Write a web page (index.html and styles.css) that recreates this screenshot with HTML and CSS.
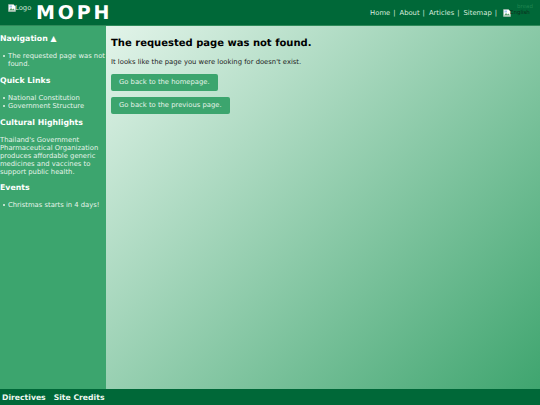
FILE: index.html
```html
<!DOCTYPE html>
<html>
<head>
    <title>MOPH</title>
    <link rel="stylesheet" href="styles.css">
</head>
<body>
    <header class="topbar">
        <div class="brand">
            <span class="logo">
                <svg class="broken" viewBox="0 0 16 16"><path d="M1 1h10l4 4v10H1z" fill="#fff" stroke="#a9b4ae"/><path d="M2 13l4-5 3 3 2-2 3 4z" fill="#5d9e6f"/><path d="M3 3h5v4H3z" fill="#a8c8f0"/></svg>Logo
            </span>
            <span class="site-name">MOPH</span>
        </div>
        <nav class="topnav">
            <a href="#">Home</a><span class="sep">|</span>
            <a href="#">About</a><span class="sep">|</span>
            <a href="#">Articles</a><span class="sep">|</span>
            <a href="#">Sitemap</a><span class="sep">|</span>
            <span class="lang">
                <svg class="broken" viewBox="0 0 16 16"><path d="M1 1h10l4 4v10H1z" fill="#fff" stroke="#a9b4ae"/><path d="M2 13l4-5 3 3 2-2 3 4z" fill="#5d9e6f"/><path d="M3 3h5v4H3z" fill="#a8c8f0"/></svg>English
            </span>
        </nav>
        <span class="crumb">bread</span>
    </header>
    <div class="middle">
        <aside class="sidebar">
            <h3>Navigation ▲</h3>
            <ul>
                <li>The requested page was not found.</li>
            </ul>
            <h3>Quick Links</h3>
            <ul>
                <li>National Constitution</li>
                <li>Government Structure</li>
            </ul>
            <h3>Cultural Highlights</h3>
            <p>Thailand's Government Pharmaceutical Organization produces affordable generic medicines and vaccines to support public health.</p>
            <h3>Events</h3>
            <ul>
                <li>Christmas starts in 4 days!</li>
            </ul>
        </aside>
        <main class="content">
            <h1>The requested page was not found.</h1>
            <p>It looks like the page you were looking for doesn't exist.</p>
            <a class="btn" href="#">Go back to the homepage.</a>
            <a class="btn" href="#">Go back to the previous page.</a>
        </main>
    </div>
    <footer class="bottombar">
        <a href="#">Directives</a>
        <a href="#">Site Credits</a>
    </footer>
</body>
</html>
```

FILE: styles.css
```css
html, body {
    height: 100%;
}
body {
    margin: 0;
    display: flex;
    flex-direction: column;
    font-family: "DejaVu Sans", sans-serif;
    font-size: 6.8px;
    text-rendering: geometricPrecision;
    overflow: hidden;
}
.topbar {
    height: 25px;
    flex: none;
    display: flex;
    justify-content: space-between;
    background-color: #006838;
    border-bottom: 1px solid #2f8a5a;
    position: relative;
}
.brand {
    display: flex;
    align-items: flex-start;
    padding-left: 8px;
}
.logo {
    display: flex;
    align-items: center;
    width: 28px;
    height: 8px;
    margin-top: 4px;
    color: #d5e8dc;
    white-space: nowrap;
}
.broken {
    flex: none;
    width: 8px;
    height: 8px;
    margin-right: -1px;
}
.site-name {
    color: #fff;
    font-size: 19px;
    font-weight: bold;
    letter-spacing: 2.8px;
    line-height: 26px;
}
.topnav {
    display: flex;
    align-items: center;
    height: 25px;
    padding-right: 10px;
    color: #d9ecdf;
}
.topnav a {
    color: #d9ecdf;
    text-decoration: none;
}
.sep {
    margin: 0 4px 0 3px;
}
.lang {
    display: flex;
    align-items: center;
    width: 27px;
    margin-left: 2px;
    font-size: 5.5px;
    color: #0b2b18;
    white-space: nowrap;
}
.crumb {
    position: absolute;
    top: 4px;
    right: 7px;
    font-size: 5.5px;
    color: #1f8450;
}
.middle {
    flex: 1;
    display: flex;
    min-height: 0;
}
.sidebar {
    width: 106px;
    flex: none;
    padding-top: 7.5px;
    background-color: #3ca56e;
    color: #e6f4ea;
    line-height: 8px;
}
.sidebar h3 {
    margin: 0;
    font-size: 7.8px;
    line-height: 10px;
    color: #fff;
}
.sidebar ul {
    margin: 8px 0;
    padding: 0;
    list-style: none;
}
.sidebar li {
    display: flex;
}
.sidebar li::before {
    content: "";
    flex: none;
    width: 2px;
    height: 2px;
    margin: 3px 3px 0 3px;
    border-radius: 50%;
    background-color: #e6f4ea;
}
.sidebar p {
    margin: 8px 0 7px;
}
.content {
    flex: 1;
    padding: 11px 5px;
    background: linear-gradient(135deg, #e3f4ea 0%, #3fa56f 100%);
    color: #222;
}
.content h1 {
    margin: 0 0 6px;
    font-size: 10px;
    line-height: 14px;
    color: #000;
}
.content p {
    margin: 0 0 6px;
    line-height: 11px;
}
.btn {
    display: table;
    margin-bottom: 6px;
    padding: 4px 8px;
    line-height: 9px;
    background-color: #3ca56e;
    color: #e6f4ea;
    text-decoration: none;
    border-radius: 2px;
}
.bottombar {
    height: 16px;
    flex: none;
    display: flex;
    align-items: center;
    gap: 8px;
    padding-left: 2px;
    background-color: #006838;
}
.bottombar a {
    color: #eef8f1;
    font-size: 7.7px;
    font-weight: bold;
    text-decoration: none;
}
```
